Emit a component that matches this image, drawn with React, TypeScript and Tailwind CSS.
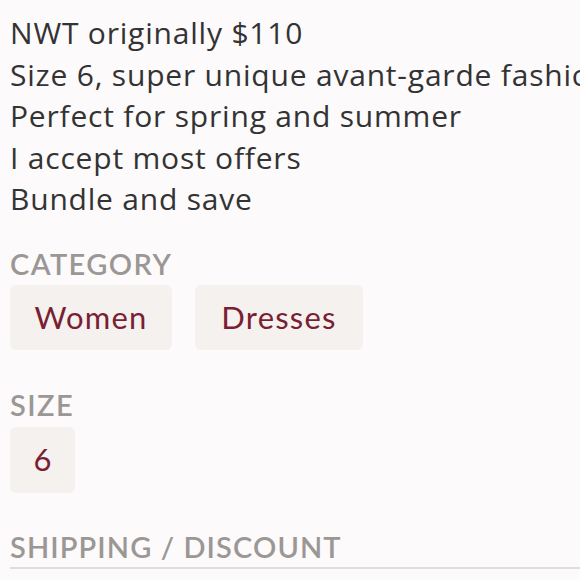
export default function App() {
  const font = { fontFamily: '"Lato", "Open Sans", sans-serif' };
  return (
    <div className="w-[580px] h-[580px] overflow-hidden bg-[#fcfafb] px-[10px]" style={font}>
      <div className="pt-[12px] text-[30px] leading-[41.5px] tracking-[0.8px] text-[#333333] whitespace-nowrap" style={{ fontFamily: '"Open Sans", sans-serif' }}>
        <div>NWT originally $110</div>
        <div>Size 6, super unique avant-garde fashion</div>
        <div>Perfect for spring and summer</div>
        <div>I accept most offers</div>
        <div>Bundle and save</div>
      </div>
      <div className="mt-[27px] text-[29px] leading-[34px] tracking-[1.4px] font-semibold text-[#9b9794]">CATEGORY</div>
      <div className="mt-[4px] flex gap-[23px]">
        <div className="h-[65px] w-[162px] rounded-[6px] bg-[#f5f1ef] flex items-center justify-center text-[31px] tracking-[1.2px] text-[#7a1f33]">Women</div>
        <div className="h-[65px] w-[168px] rounded-[6px] bg-[#f5f1ef] flex items-center justify-center text-[31px] tracking-[1.2px] text-[#7a1f33]">Dresses</div>
      </div>
      <div className="mt-[38px] text-[29px] leading-[34px] tracking-[1.4px] font-semibold text-[#9b9794]">SIZE</div>
      <div className="mt-[5px] flex">
        <div className="h-[66px] w-[65px] rounded-[6px] bg-[#f5f1ef] flex items-center justify-center text-[31px] text-[#7a1f33]">6</div>
      </div>
      <div className="mt-[37px] text-[29px] leading-[34px] tracking-[1.1px] font-semibold text-[#9b9794] pb-[3px] border-b-2 border-[#e0dddc] -mr-[10px] whitespace-nowrap">SHIPPING / DISCOUNT</div>
    </div>
  );
}
